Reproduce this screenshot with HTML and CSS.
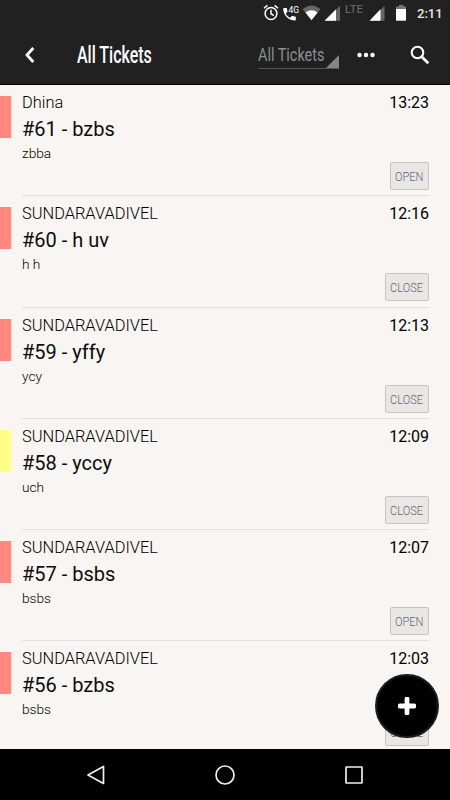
FILE: index.html
```html
<!DOCTYPE html>
<html lang="en">
<head>
  <meta charset="UTF-8">
  <meta name="viewport" content="width=device-width, initial-scale=1.0">
  <title>All Tickets</title>
  <link rel="stylesheet" href="styles.css">
</head>
<body>
  <div class="screen">
    <!-- Status bar -->
    <div class="status-bar">
      <svg class="status-icons" width="147" height="26" viewBox="0 0 147 26">
        <!-- alarm -->
        <g fill="none" stroke="#fff" stroke-width="1.5">
          <circle cx="8" cy="13.500" r="5.900"/>
          <path d="M8 9.800v4l2.800 1.700M1 8.300l3.400-2.900M15 8.300l-3.400-2.900"/>
        </g>
        <!-- call -->
        <path fill="#fff" d="M21 8h2.400c.4 0 .6.2.6.6 0 .9.2 1.800.4 2.600.1.3 0 .6-.2.8l-1.400 1.400c1 2 2.400 3.400 4.300 4.400l1.500-1.500c.2-.2.5-.3.8-.2.8.3 1.700.4 2.700.4.400 0 .7.200.7.600v2.700c0 .4-.3.600-.7.600C25.400 20.400 20.200 15 20.200 8.700c0-.4.3-.7.800-.7z"/>
        <text x="25.500" y="13" class="net-4g">4G</text>
        <!-- wifi -->
        <path fill="#666" d="M39.500 9.300Q48.500 1.500 57.500 9.300L48.500 20z"/>
        <path fill="#fff" d="M42.500 12.500Q48.500 8 54.500 12.500L48.500 20.200z"/>
        <!-- first signal -->
        <path fill="#666" d="M62 20.700 77 5.700v15z"/>
        <path fill="#fff" d="M61.500 20.700 73 9.200v11.500z"/>
        <text x="82" y="13.300" class="net-lte">LTE</text>
        <!-- second signal -->
        <path fill="#666" d="M107 20.700 121.500 5.700v15z"/>
        <path fill="#fff" d="M106.500 20.700 117.500 9.200v11.500z"/>
        <!-- battery -->
        <path fill="#777" d="M136 5h4.500v1.500h2.500V9h-10V6.500h3z"/>
        <path fill="#fff" d="M133 9h10v11.700h-10z"/>
      </svg>
      <span class="clock">2:11</span>
    </div>

    <!-- Toolbar -->
    <div class="toolbar">
      <svg class="back" width="12" height="18" viewBox="0 0 12 18">
        <path d="M9.300 2 3 9l6.300 7" fill="none" stroke="#fff" stroke-width="2.800"/>
      </svg>
      <h1 class="title"><span>All Tickets</span></h1>
      <div class="filter">
        <span>All Tickets</span>
        <svg width="13" height="13" viewBox="0 0 13 13"><path d="M13 0v13H0z" fill="#858585"/></svg>
      </div>
      <svg class="more" width="18" height="6" viewBox="0 0 18 6" fill="#fff">
        <circle cx="2.500" cy="3" r="2.200"/><circle cx="9" cy="3" r="2.200"/><circle cx="15.500" cy="3" r="2.200"/>
      </svg>
      <svg class="search" width="20" height="20" viewBox="0 0 20 20" fill="none" stroke="#fff">
        <circle cx="7.500" cy="7.500" r="5.800" stroke-width="2.100"/>
        <path d="M11.700 11.700 18.300 18.300" stroke-width="2.700"/>
      </svg>
    </div>

    <!-- Tickets -->
    <div class="ticket-list">
      <div class="ticket">
        <div class="priority high"></div>
        <div class="ticket-body">
          <div class="ticket-head"><span>Dhina</span><time>13:23</time></div>
          <div class="subject">#61 - bzbs</div>
          <div class="message">zbba</div>
          <button class="status open"><span>OPEN</span></button>
        </div>
      </div>
      <div class="ticket">
        <div class="priority high"></div>
        <div class="ticket-body">
          <div class="ticket-head"><span>SUNDARAVADIVEL</span><time>12:16</time></div>
          <div class="subject">#60 - h uv</div>
          <div class="message">h h</div>
          <button class="status close"><span>CLOSE</span></button>
        </div>
      </div>
      <div class="ticket">
        <div class="priority high"></div>
        <div class="ticket-body">
          <div class="ticket-head"><span>SUNDARAVADIVEL</span><time>12:13</time></div>
          <div class="subject">#59 - yffy</div>
          <div class="message">ycy</div>
          <button class="status close"><span>CLOSE</span></button>
        </div>
      </div>
      <div class="ticket">
        <div class="priority medium"></div>
        <div class="ticket-body">
          <div class="ticket-head"><span>SUNDARAVADIVEL</span><time>12:09</time></div>
          <div class="subject">#58 - yccy</div>
          <div class="message">uch</div>
          <button class="status close"><span>CLOSE</span></button>
        </div>
      </div>
      <div class="ticket">
        <div class="priority high"></div>
        <div class="ticket-body">
          <div class="ticket-head"><span>SUNDARAVADIVEL</span><time>12:07</time></div>
          <div class="subject">#57 - bsbs</div>
          <div class="message">bsbs</div>
          <button class="status open"><span>OPEN</span></button>
        </div>
      </div>
      <div class="ticket">
        <div class="priority high"></div>
        <div class="ticket-body">
          <div class="ticket-head"><span>SUNDARAVADIVEL</span><time>12:03</time></div>
          <div class="subject">#56 - bzbs</div>
          <div class="message">bsbs</div>
          <button class="status close"><span>CLOSE</span></button>
        </div>
      </div>
    </div>

    <button class="fab" aria-label="Add ticket">
      <svg width="18" height="18" viewBox="0 0 18 18"><path d="M9 2v14M2 9h14" stroke="#fff" stroke-width="4.800" stroke-linecap="round"/></svg>
    </button>

    <!-- Android navigation -->
    <div class="nav-bar">
      <svg width="20" height="22" viewBox="0 0 20 22"><path d="M17.500 2.500v17L2 11z"/></svg>
      <svg width="20" height="22" viewBox="0 0 20 22"><circle cx="10" cy="11" r="9"/></svg>
      <svg width="20" height="22" viewBox="0 0 20 22"><rect x="2" y="3" width="16" height="16" rx=".5"/></svg>
    </div>
  </div>
</body>
</html>
```

FILE: styles.css
```css
body {
  margin: 0;
  background: #000;
  font-family: Roboto, Arial, sans-serif;
}
.screen {
  width: 450px;
  height: 800px;
  position: relative;
  overflow: hidden;
  display: flex;
  flex-direction: column;
  background: #f8f5f2;
}
.status-bar {
  height: 26px;
  flex: none;
  display: flex;
  padding-left: 263px;
  background: #212121;
}
.net-4g {
  font-size: 8.5px;
  fill: #fff;
}
.net-lte {
  font-size: 11.5px;
  fill: #707070;
}
.clock {
  margin-left: 7px;
  font-size: 13px;
  font-weight: 500;
  line-height: 27px;
  color: #e8e8e8;
}
.toolbar {
  height: 59px;
  flex: none;
  box-sizing: border-box;
  display: flex;
  align-items: center;
  padding-left: 24px;
  background: #212121;
  border-bottom: 1px solid #000;
}
.title {
  width: 75px;
  margin: 2px 106px 0 41px;
  font-size: 23px;
  font-weight: 500;
  line-height: 30px;
  color: #fff;
  white-space: nowrap;
}
/* condensed lettering */
.title span,
.filter span,
.status span {
  display: inline-block;
  transform-origin: left center;
}
.title span {
  transform: scaleX(0.695);
}
.filter {
  width: 81px;
  height: 28px;
  box-sizing: border-box;
  display: flex;
  justify-content: space-between;
  align-items: flex-end;
  margin-right: 18px;
  border-bottom: 1px solid #555;
  font-size: 17.5px;
  line-height: 25px;
  color: #8f8f8f;
  white-space: nowrap;
}
.filter span {
  width: 68px;
  transform: scaleX(0.825);
}
.filter svg {
  flex: none;
}
.search {
  margin-left: 35px;
}

.ticket-list {
  height: 664px;
  flex: none;
  overflow: hidden;
}
.ticket {
  height: 111.25px;
  display: flex;
}
.priority {
  width: 11px;
  height: 42px;
  margin: 11px 11px 0 0;
}
.priority.high {
  background: #ff897f;
}
.priority.medium {
  background: #ffff85;
}
.ticket-body {
  width: 407px;
  height: 111.25px;
  box-sizing: border-box;
  display: flex;
  flex-direction: column;
  padding-top: 8px;
  border-bottom: 1px solid #e1e0de;
  color: #0c0c0c;
}
.ticket-head {
  display: flex;
  justify-content: space-between;
  font-size: 16.4px;
  font-weight: 300;
  line-height: 20px;
  color: #000;
}
.ticket-head time {
  font-size: 16px;
  font-weight: 400;
}
.subject {
  margin-top: 3px;
  font-size: 20px;
  line-height: 26px;
}
.message {
  margin-top: 2px;
  font-size: 13.7px;
  font-weight: 300;
  line-height: 18px;
  color: #000;
}
.status {
  height: 28px;
  box-sizing: border-box;
  align-self: flex-end;
  margin: 0;
  padding: 0 0 0 4px;
  border: 1px solid #c6c4c1;
  border-radius: 2px;
  background: #e9e6e3;
  font-family: inherit;
  font-size: 13.5px;
  font-weight: 300;
  text-align: left;
  white-space: nowrap;
  color: #5a6a7c;
}
.status.open {
  width: 39px;
}
.status.close {
  width: 44px;
}
.status span {
  transform: scaleX(0.82);
}

.fab {
  position: absolute;
  left: 375px;
  top: 674px;
  width: 64px;
  height: 64px;
  display: flex;
  justify-content: center;
  align-items: center;
  padding: 0;
  border: 2px solid #1d1d1d;
  border-radius: 50%;
  background: #000;
}
.nav-bar {
  flex: 1;
  display: flex;
  justify-content: center;
  align-items: center;
  gap: 109px;
  background: #000;
}
.nav-bar svg {
  fill: none;
  stroke: #f0f0f0;
  stroke-width: 1.7;
  stroke-linejoin: round;
}
```
